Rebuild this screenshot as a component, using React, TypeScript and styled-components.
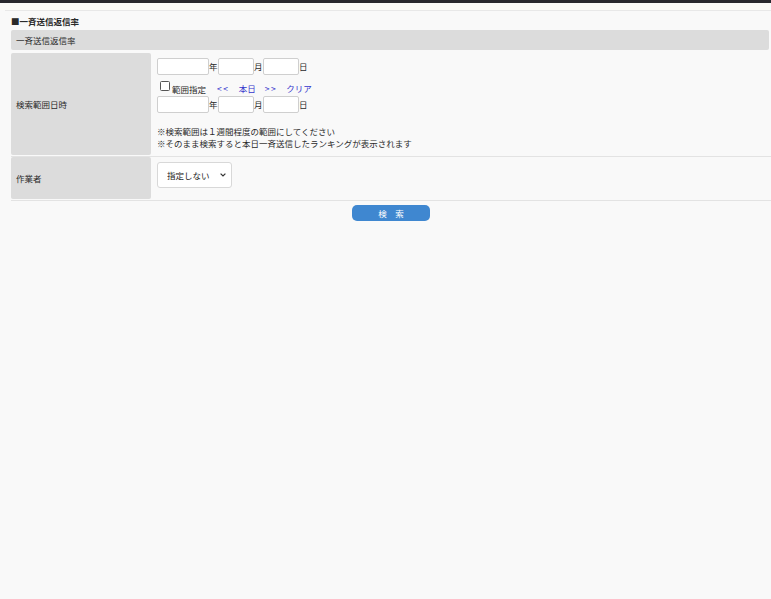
import React from "react";
import styled, { createGlobalStyle } from "styled-components";

const GlobalStyle = createGlobalStyle`
  html, body { margin: 0; padding: 0; }
  body {
    background: #f9f9f9;
    font-family: "Noto Sans CJK JP", "Noto Sans", sans-serif;
    font-size: 8.5px;
    color: #2a2a2a;
  }
  * { box-sizing: border-box; }
`;

const TopBar = styled.div`
  height: 3px;
  background: #27272f;
`;

const Divider = styled.div`
  margin: 7px 0 0 5px;
  height: 1px;
  background: #e8e8e8;
`;

const Main = styled.div`
  padding: 0 0 0 11px;
`;

const Title = styled.div`
  height: 19px;
  padding-top: 1px;
  display: flex;
  align-items: center;
  font-weight: bold;
  line-height: 1;
`;

const HeaderBar = styled.div`
  height: 20px;
  margin-right: 2px;
  background: #dcdcdc;
  border-radius: 2px;
  padding-left: 5px;
  display: flex;
  align-items: center;
`;

const Row = styled.div<{ $first?: boolean }>`
  display: grid;
  grid-template-columns: 140px 1fr;
  column-gap: 1px;
  margin-top: ${(p) => (p.$first ? "3px" : "0")};
  padding-bottom: 1px;
  border-bottom: 1px solid #e3e3e3;
`;

const Label = styled.div<{ $h: number }>`
  height: ${(p) => p.$h}px;
  background: #dcdcdc;
  border-radius: 2px;
  padding-left: 5px;
  display: flex;
  align-items: center;
`;

const Cell = styled.div`
  padding: 5px 0 0 5px;
  display: flex;
  flex-direction: column;
`;

const DateLine = styled.div`
  display: flex;
  align-items: center;
  height: 17px;
`;

const TextBox = styled.input<{ $w: number }>`
  width: ${(p) => p.$w}px;
  height: 17px;
  border: 1px solid #cfcfcf;
  border-radius: 2px;
  background: #fff;
  padding: 0 2px;
  font: inherit;
  outline: none;
`;

const Unit = styled.span`
  width: 9px;
  line-height: 1;
`;

const CheckLine = styled.div`
  height: 21px;
  display: flex;
  align-items: flex-start;
  padding-top: 6px;
`;

const CheckBox = styled.input`
  appearance: none;
  margin: 0 2px 0 3px;
  width: 10px;
  height: 10px;
  border: 1px solid #555;
  border-radius: 1.5px;
  background: #fff;
`;

const CheckText = styled.span`
  line-height: 1;
  margin-top: 4px;
`;

const Links = styled.div`
  display: flex;
  gap: 9px;
  margin-left: 11px;
  margin-top: 3px;
  line-height: 1;
`;

const NavLink = styled.a<{ $arrow?: boolean }>`
  color: #3535cc;
  text-decoration: none;
  cursor: pointer;
  letter-spacing: ${(p) => (p.$arrow ? "1.6px" : "0")};
`;

const Notes = styled.div`
  margin-top: 12px;
  line-height: 12px;
`;

const SelectWrap = styled.div`
  position: relative;
  width: 75px;
  height: 26px;
`;

const Select = styled.select`
  appearance: none;
  width: 75px;
  height: 26px;
  border: 1px solid #d8d8d8;
  border-radius: 3px;
  background: #fff;
  padding: 0 0 0 9px;
  font: inherit;
  color: #222;
  outline: none;
`;

const Chevron = styled.svg`
  position: absolute;
  right: 6px;
  top: 11px;
  width: 6px;
  height: 4px;
  pointer-events: none;
`;

const ButtonBar = styled.div`
  display: flex;
  justify-content: center;
  padding-top: 4px;
`;

const SearchButton = styled.button`
  width: 78px;
  height: 16px;
  border: none;
  border-radius: 5px;
  background: #3f87d0;
  color: #fff;
  font: inherit;
  font-size: 8.5px;
  padding: 0;
  line-height: 1;
  cursor: pointer;
`;

export default function App() {
  return (
    <>
      <GlobalStyle />
      <TopBar />
      <Divider />
      <Main>
        <Title>■一斉送信返信率</Title>
        <HeaderBar>一斉送信返信率</HeaderBar>
        <Row $first>
          <Label $h={102}>検索範囲日時</Label>
          <Cell>
            <DateLine>
              <TextBox $w={52} />
              <Unit>年</Unit>
              <TextBox $w={36} />
              <Unit>月</Unit>
              <TextBox $w={36} />
              <Unit>日</Unit>
            </DateLine>
            <CheckLine>
              <CheckBox type="checkbox" />
              <CheckText>範囲指定</CheckText>
              <Links>
                <NavLink $arrow>&lt;&lt;</NavLink>
                <NavLink>本日</NavLink>
                <NavLink $arrow>&gt;&gt;</NavLink>
                <NavLink>クリア</NavLink>
              </Links>
            </CheckLine>
            <DateLine>
              <TextBox $w={52} />
              <Unit>年</Unit>
              <TextBox $w={36} />
              <Unit>月</Unit>
              <TextBox $w={36} />
              <Unit>日</Unit>
            </DateLine>
            <Notes>
              <div>※検索範囲は１週間程度の範囲にしてください</div>
              <div>※そのまま検索すると本日一斉送信したランキングが表示されます</div>
            </Notes>
          </Cell>
        </Row>
        <Row>
          <Label $h={42}>作業者</Label>
          <Cell>
            <SelectWrap>
              <Select defaultValue="">
                <option value="">指定しない</option>
              </Select>
              <Chevron viewBox="0 0 6 4">
                <path d="M0.6 0.6 L3 3 L5.4 0.6" fill="none" stroke="#333" strokeWidth="1.2" />
              </Chevron>
            </SelectWrap>
          </Cell>
        </Row>
        <ButtonBar>
          <SearchButton>検　索</SearchButton>
        </ButtonBar>
      </Main>
    </>
  );
}
